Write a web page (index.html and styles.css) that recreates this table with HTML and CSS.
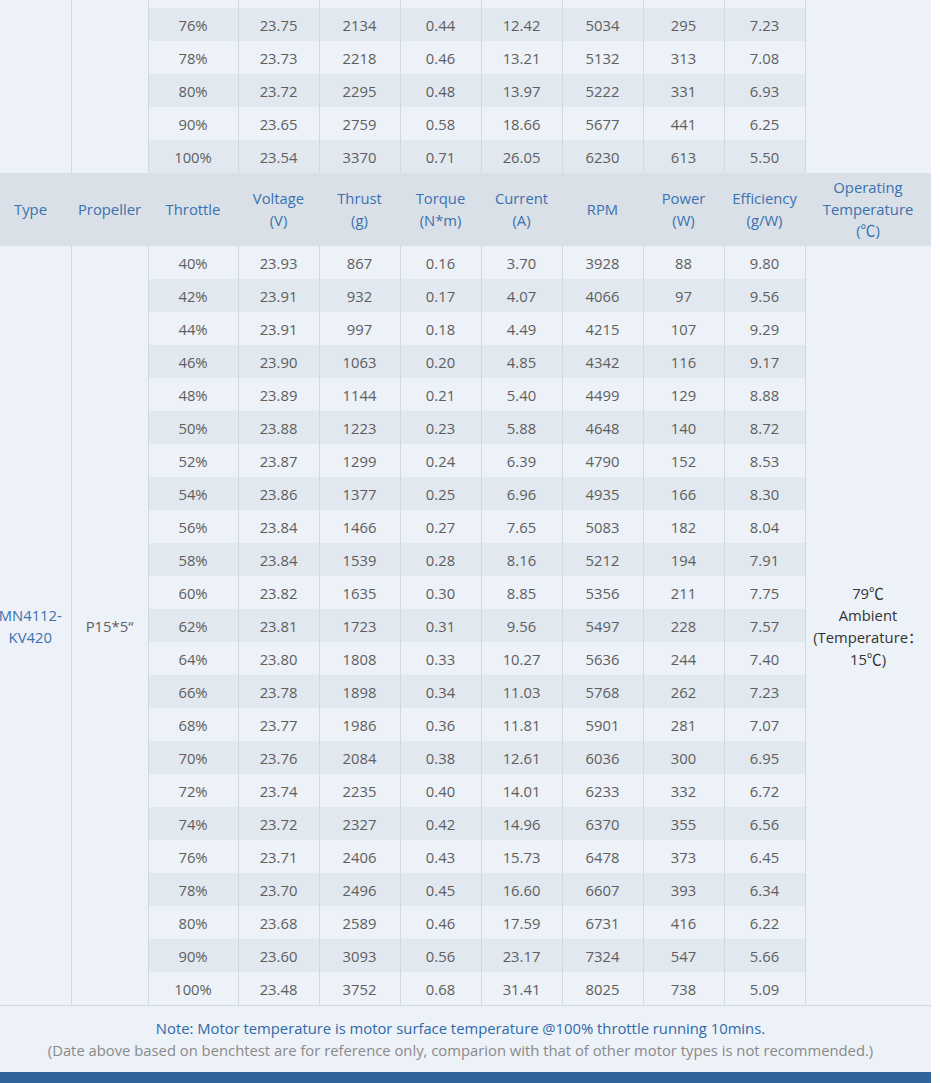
FILE: index.html
```html
<!DOCTYPE html>
<html>
<head>
<meta charset="utf-8">
<link rel="stylesheet" href="styles.css">
</head>
<body>
<div class="page">
  <div class="table-wrap">
    <table class="spec">
      <colgroup>
        <col class="c-type"><col class="c-prop"><col class="c-thr">
        <col class="c-num"><col class="c-num"><col class="c-num"><col class="c-num">
        <col class="c-num"><col class="c-num"><col class="c-num"><col class="c-temp">
      </colgroup>
      <tbody class="group">
        <tr><td class="span" rowspan="6"></td><td class="span" rowspan="6"></td><td></td><td></td><td></td><td></td><td></td><td></td><td></td><td></td><td class="span" rowspan="6"></td></tr>
        <tr><td>76%</td><td>23.75</td><td>2134</td><td>0.44</td><td>12.42</td><td>5034</td><td>295</td><td>7.23</td></tr>
        <tr><td>78%</td><td>23.73</td><td>2218</td><td>0.46</td><td>13.21</td><td>5132</td><td>313</td><td>7.08</td></tr>
        <tr><td>80%</td><td>23.72</td><td>2295</td><td>0.48</td><td>13.97</td><td>5222</td><td>331</td><td>6.93</td></tr>
        <tr><td>90%</td><td>23.65</td><td>2759</td><td>0.58</td><td>18.66</td><td>5677</td><td>441</td><td>6.25</td></tr>
        <tr><td>100%</td><td>23.54</td><td>3370</td><td>0.71</td><td>26.05</td><td>6230</td><td>613</td><td>5.50</td></tr>
      </tbody>
      <tbody class="head">
        <tr>
          <th>Type</th><th>Propeller</th><th>Throttle</th><th>Voltage<br>(V)</th><th>Thrust<br>(g)</th><th>Torque<br>(N*m)</th><th>Current<br>(A)</th><th>RPM</th><th>Power<br>(W)</th><th>Efficiency<br>(g/W)</th><th>Operating<br>Temperature<br>(℃)</th>
        </tr>
      </tbody>
      <tbody class="group second">
        <tr><td class="span type" rowspan="23">MN4112-<br>KV420</td><td class="span prop" rowspan="23">P15*5“</td><td>40%</td><td>23.93</td><td>867</td><td>0.16</td><td>3.70</td><td>3928</td><td>88</td><td>9.80</td><td class="span temp" rowspan="23">79℃<br>Ambient<br>(Temperature：<br>15℃)</td></tr>
        <tr><td>42%</td><td>23.91</td><td>932</td><td>0.17</td><td>4.07</td><td>4066</td><td>97</td><td>9.56</td></tr>
        <tr><td>44%</td><td>23.91</td><td>997</td><td>0.18</td><td>4.49</td><td>4215</td><td>107</td><td>9.29</td></tr>
        <tr><td>46%</td><td>23.90</td><td>1063</td><td>0.20</td><td>4.85</td><td>4342</td><td>116</td><td>9.17</td></tr>
        <tr><td>48%</td><td>23.89</td><td>1144</td><td>0.21</td><td>5.40</td><td>4499</td><td>129</td><td>8.88</td></tr>
        <tr><td>50%</td><td>23.88</td><td>1223</td><td>0.23</td><td>5.88</td><td>4648</td><td>140</td><td>8.72</td></tr>
        <tr><td>52%</td><td>23.87</td><td>1299</td><td>0.24</td><td>6.39</td><td>4790</td><td>152</td><td>8.53</td></tr>
        <tr><td>54%</td><td>23.86</td><td>1377</td><td>0.25</td><td>6.96</td><td>4935</td><td>166</td><td>8.30</td></tr>
        <tr><td>56%</td><td>23.84</td><td>1466</td><td>0.27</td><td>7.65</td><td>5083</td><td>182</td><td>8.04</td></tr>
        <tr><td>58%</td><td>23.84</td><td>1539</td><td>0.28</td><td>8.16</td><td>5212</td><td>194</td><td>7.91</td></tr>
        <tr><td>60%</td><td>23.82</td><td>1635</td><td>0.30</td><td>8.85</td><td>5356</td><td>211</td><td>7.75</td></tr>
        <tr><td>62%</td><td>23.81</td><td>1723</td><td>0.31</td><td>9.56</td><td>5497</td><td>228</td><td>7.57</td></tr>
        <tr><td>64%</td><td>23.80</td><td>1808</td><td>0.33</td><td>10.27</td><td>5636</td><td>244</td><td>7.40</td></tr>
        <tr><td>66%</td><td>23.78</td><td>1898</td><td>0.34</td><td>11.03</td><td>5768</td><td>262</td><td>7.23</td></tr>
        <tr><td>68%</td><td>23.77</td><td>1986</td><td>0.36</td><td>11.81</td><td>5901</td><td>281</td><td>7.07</td></tr>
        <tr><td>70%</td><td>23.76</td><td>2084</td><td>0.38</td><td>12.61</td><td>6036</td><td>300</td><td>6.95</td></tr>
        <tr><td>72%</td><td>23.74</td><td>2235</td><td>0.40</td><td>14.01</td><td>6233</td><td>332</td><td>6.72</td></tr>
        <tr><td>74%</td><td>23.72</td><td>2327</td><td>0.42</td><td>14.96</td><td>6370</td><td>355</td><td>6.56</td></tr>
        <tr><td>76%</td><td>23.71</td><td>2406</td><td>0.43</td><td>15.73</td><td>6478</td><td>373</td><td>6.45</td></tr>
        <tr><td>78%</td><td>23.70</td><td>2496</td><td>0.45</td><td>16.60</td><td>6607</td><td>393</td><td>6.34</td></tr>
        <tr><td>80%</td><td>23.68</td><td>2589</td><td>0.46</td><td>17.59</td><td>6731</td><td>416</td><td>6.22</td></tr>
        <tr><td>90%</td><td>23.60</td><td>3093</td><td>0.56</td><td>23.17</td><td>7324</td><td>547</td><td>5.66</td></tr>
        <tr><td>100%</td><td>23.48</td><td>3752</td><td>0.68</td><td>31.41</td><td>8025</td><td>738</td><td>5.09</td></tr>
      </tbody>
    </table>
    <div class="note">
      <p class="note-main">Note: Motor temperature is motor surface temperature @100% throttle running 10mins.</p>
      <p class="note-sub">(Date above based on benchtest are for reference only, comparion with that of other motor types is not recommended.)</p>
    </div>
  </div>
  <div class="footer-bar"></div>
</div>
</body>
</html>
```

FILE: styles.css
```css
html, body {
  margin: 0;
  padding: 0;
  background: #ffffff;
}

.page {
  width: 931px;
  height: 1083px;
  overflow: hidden;
  background: #edf1f8;
  font-family: "Open Sans", "Noto Sans CJK SC", sans-serif;
  font-size: 14.8px;
}

.table-wrap {
  width: 941px;
  margin-left: -10px;
  margin-top: -25px;
}

.spec {
  width: 941px;
  border-collapse: collapse;
  table-layout: fixed;
  border-bottom: 1px solid #d2d8df;
}

.c-type { width: 81px; }
.c-prop { width: 77px; }
.c-thr { width: 90px; }
.c-num { width: 81px; }
.c-temp { width: 126px; }

.spec td {
  height: 33px;
  padding: 0;
  text-align: center;
  vertical-align: middle;
  color: #5e5e5e;
  line-height: 22px;
  border-left: 1px solid #d2d8df;
  border-right: 1px solid #d2d8df;
  background: #edf1f8;
}

.group tr:nth-child(even) td {
  background: #e2e8f0;
}

.group td.span {
  background: #edf1f8;
}

.spec td:first-child.span {
  border-left: none;
}

.head th {
  height: 73px;
  padding: 0;
  font-weight: normal;
  text-align: center;
  vertical-align: middle;
  color: #3a72b0;
  line-height: 21.5px;
  background: #d9e0e7;
  border: none;
}

.spec td.type {
  color: #3a72b0;
}

.spec td.prop {
  color: #5e5e5e;
}

.spec td.temp {
  color: #333333;
}

.note {
  padding: 11px 0;
  text-align: center;
  line-height: 22px;
}

.note p {
  margin: 0;
}

.note-main {
  color: #2f6aa8;
}

.note-sub {
  color: #8a8a8a;
}

.footer-bar {
  height: 40px;
  background: #30649a;
}
```
